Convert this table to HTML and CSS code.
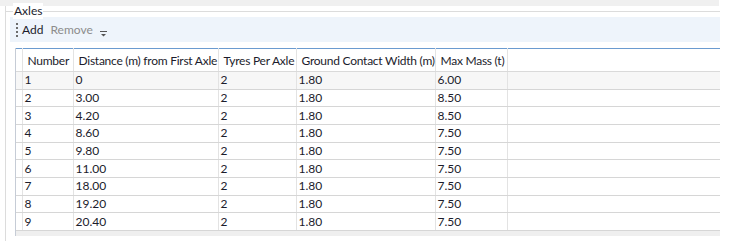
FILE: index.html
```html
<!DOCTYPE html>
<html lang="en">
<head>
  <meta charset="UTF-8">
  <title>Axles</title>
  <link rel="stylesheet" href="styles.css">
</head>
<body>
  <div class="band"></div>
  <div class="group">
    <div class="legend"><span>Axles</span></div>
    <div class="toolbar">
      <span class="grip"><i></i><i></i><i></i><i></i></span>
      <span class="btn">Add</span>
      <span class="btn disabled">Remove</span>
      <span class="overflow">
        <svg width="7" height="6" viewBox="0 0 7 6"><rect x="0" y="0" width="7" height="1" fill="#555"/><path d="M1 3h5l-2.5 2.5z" fill="#555"/></svg>
      </span>
    </div>
    <div class="grid">
      <table>
        <colgroup>
          <col class="c-hdr"><col class="c-num"><col class="c-dist"><col class="c-tyre"><col class="c-width"><col class="c-mass"><col>
        </colgroup>
        <thead>
          <tr>
            <th></th>
            <th>Number</th>
            <th>Distance (m) from First Axle</th>
            <th>Tyres Per Axle</th>
            <th>Ground Contact Width (m)</th>
            <th>Max Mass (t)</th>
            <th class="fill"></th>
          </tr>
        </thead>
        <tbody>
          <tr class="current"><td></td><td>1</td><td>0</td><td>2</td><td>1.80</td><td>6.00</td><td class="fill"></td></tr>
          <tr><td></td><td>2</td><td>3.00</td><td>2</td><td>1.80</td><td>8.50</td><td class="fill"></td></tr>
          <tr><td></td><td>3</td><td>4.20</td><td>2</td><td>1.80</td><td>8.50</td><td class="fill"></td></tr>
          <tr><td></td><td>4</td><td>8.60</td><td>2</td><td>1.80</td><td>7.50</td><td class="fill"></td></tr>
          <tr><td></td><td>5</td><td>9.80</td><td>2</td><td>1.80</td><td>7.50</td><td class="fill"></td></tr>
          <tr><td></td><td>6</td><td>11.00</td><td>2</td><td>1.80</td><td>7.50</td><td class="fill"></td></tr>
          <tr><td></td><td>7</td><td>18.00</td><td>2</td><td>1.80</td><td>7.50</td><td class="fill"></td></tr>
          <tr><td></td><td>8</td><td>19.20</td><td>2</td><td>1.80</td><td>7.50</td><td class="fill"></td></tr>
          <tr><td></td><td>9</td><td>20.40</td><td>2</td><td>1.80</td><td>7.50</td><td class="fill"></td></tr>
        </tbody>
      </table>
      <div class="hscroll"></div>
    </div>
  </div>
</body>
</html>
```

FILE: styles.css
```css
body {
  margin: 0;
  background: #fff;
  font-family: 'Lato', 'Liberation Sans', sans-serif;
  font-size: 12px;
  color: #1c1c2c;
}

.band {
  width: 719px;
  height: 6px;
  background: #f0f0f0;
}

.group {
  width: 714px;
  margin-left: 5px;
  border-left: 1px solid #dcdcdc;
  height: 235px;
}

.legend {
  height: 11px;
  position: relative;
}

.legend::after {
  content: "";
  display: block;
  position: absolute;
  left: 0;
  right: 0;
  top: 5px;
  border-top: 1px solid #dcdcdc;
}

.legend span {
  position: absolute;
  left: 7px;
  top: -3px;
  padding: 0 1px;
  background: #fff;
  z-index: 1;
  line-height: 16px;
}

.toolbar {
  margin-left: 4px;
  height: 25px;
  background: #eef4fb;
  display: flex;
  align-items: center;
  padding-left: 6px;
}

.grip {
  display: flex;
  flex-direction: column;
  gap: 2px;
  margin-right: 4px;
}

.grip i {
  display: block;
  width: 2px;
  height: 2px;
  background: #6d6d6d;
}

.btn {
  margin-right: 7px;
  line-height: 16px;
}

.btn.disabled {
  color: #8c8c8c;
}

.overflow {
  display: flex;
  padding-top: 9px;
}

.grid {
  margin: 6px 0 0 9px;
  border-left: 1px solid #c6ccd6;
}

table {
  width: 100%;
  border-collapse: collapse;
  table-layout: fixed;
  border-top: 1px solid #6b9bd0;
}

.c-hdr { width: 6px; }
.c-num { width: 51px; }
.c-dist { width: 145px; }
.c-tyre { width: 78px; }
.c-width { width: 139px; }
.c-mass { width: 72px; }

th {
  height: 22px;
  padding: 0 0 0 5px;
  font-weight: normal;
  text-align: left;
  white-space: nowrap;
  letter-spacing: -0.25px;
  border-right: 1px solid #e3e3e3;
  border-bottom: 1px solid #dadada;
}

td {
  height: 16.67px;
  padding: 0 0 0 2px;
  line-height: 14px;
  white-space: nowrap;
  border-right: 1px solid #e3e3e3;
  border-bottom: 1px solid #d6d6d6;
}

th:first-child, td:first-child {
  padding: 0;
}

.fill {
  border-right: none;
}

.current td {
  background: #f7f7f7;
}

.hscroll {
  height: 5px;
  background: #efefef;
}
```
